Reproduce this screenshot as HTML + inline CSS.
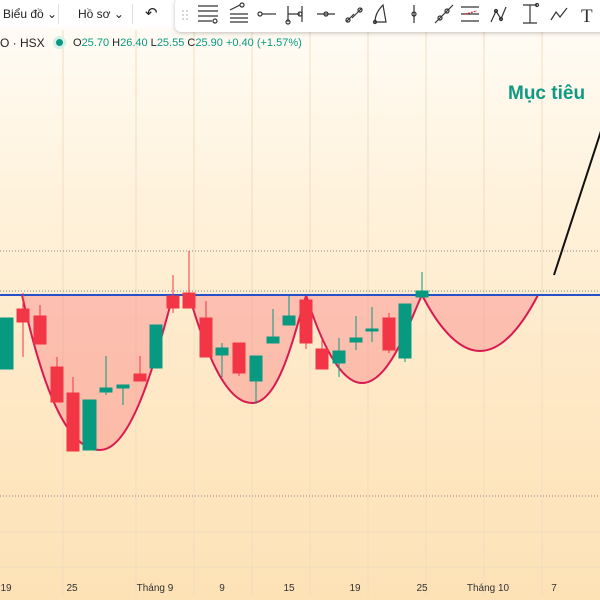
<!DOCTYPE html>
<html><head><meta charset="utf-8"><style>
html,body{margin:0;padding:0;width:600px;height:600px;overflow:hidden;font-family:"Liberation Sans",sans-serif}
body{background:linear-gradient(#fffdf9 0%,#fff3de 30%,#fee9c8 60%,#fde2b6 100%);position:relative}
.top{position:absolute;left:0;top:0;width:600px;height:28px;background:#fff;font-size:12px;color:#222}
.tb{position:absolute;left:175px;top:-2px;width:440px;height:34px;background:#fff;border-radius:6px;box-shadow:0 1px 4px rgba(0,0,0,.25)}
.leg{position:absolute;top:36px;left:0;font-size:12px;color:#222}
</style></head><body>
<svg width="600" height="600" style="position:absolute;left:0;top:0">
<g stroke="#f0dcc0" stroke-width="1">
<line x1="63" y1="30" x2="63" y2="596"/><line x1="136" y1="30" x2="136" y2="596"/><line x1="194" y1="30" x2="194" y2="596"/><line x1="252" y1="30" x2="252" y2="596"/><line x1="310" y1="30" x2="310" y2="596"/><line x1="368" y1="30" x2="368" y2="596"/><line x1="426" y1="30" x2="426" y2="596"/><line x1="484" y1="30" x2="484" y2="596"/><line x1="542" y1="30" x2="542" y2="596"/>
<line x1="0" y1="532" x2="600" y2="532"/><line x1="0" y1="567" x2="600" y2="567"/>
</g>
<g stroke="#888" stroke-dasharray="1 2" stroke-width="1">
<line x1="0" y1="251" x2="600" y2="251"/><line x1="0" y1="291" x2="600" y2="291"/><line x1="0" y1="496" x2="600" y2="496"/>
</g>
<path d="M22 295 C45 400 70 450 100 450 C135 450 160 340 173 296 Z" fill="rgba(250,110,120,0.35)"/>
<path d="M189 295 C205 350 225 403 252 403 C280 403 295 330 306 296 Z" fill="rgba(250,110,120,0.35)"/>
<path d="M306 295 C320 340 340 383 362 383 C390 383 410 320 422 295 Z" fill="rgba(250,110,120,0.35)"/>
<path d="M422 295 C440 330 460 351 480 351 C505 351 525 320 538 295 Z" fill="rgba(250,110,120,0.35)"/>
<g fill="none" stroke="#d81b50" stroke-width="2">
<path d="M22 295 C45 400 70 450 100 450 C135 450 160 340 173 296"/>
<path d="M189 295 C205 350 225 403 252 403 C280 403 295 330 306 296"/>
<path d="M306 295 C320 340 340 383 362 383 C390 383 410 320 422 295"/>
<path d="M422 295 C440 330 460 351 480 351 C505 351 525 320 538 295"/>
</g>
<line x1="0" y1="295" x2="600" y2="295" stroke="#2550c8" stroke-width="2"/>
<line x1="554" y1="275" x2="602" y2="128" stroke="#111" stroke-width="2"/>
<g stroke-width="1">
<g fill="#f23645" stroke="#f23645">
<line x1="23" y1="293" x2="23" y2="357"/><rect x="17" y="309" width="12" height="13"/>
<line x1="40" y1="305" x2="40" y2="344"/><rect x="34" y="316" width="12" height="28"/>
<line x1="57" y1="357" x2="57" y2="402"/><rect x="51" y="367" width="12" height="35"/>
<line x1="73" y1="377" x2="73" y2="451"/><rect x="67" y="393" width="12" height="58"/>
<line x1="140" y1="356" x2="140" y2="381"/><rect x="134" y="374" width="12" height="7"/>
<line x1="173" y1="275" x2="173" y2="313"/><rect x="167" y="296" width="12" height="12"/>
<line x1="189" y1="251" x2="189" y2="308"/><rect x="183" y="293" width="12" height="15"/>
<line x1="206" y1="301" x2="206" y2="357"/><rect x="200" y="318" width="12" height="39"/>
<line x1="239" y1="343" x2="239" y2="376"/><rect x="233" y="343" width="12" height="30"/>
<line x1="306" y1="296" x2="306" y2="349"/><rect x="300" y="300" width="12" height="43"/>
<line x1="322" y1="340" x2="322" y2="369"/><rect x="316" y="349" width="12" height="20"/>
<line x1="389" y1="313" x2="389" y2="353"/><rect x="383" y="318" width="12" height="32"/>
</g>
<g fill="#089981" stroke="#089981">
<rect x="0" y="318" width="13" height="51"/>
<rect x="83" y="400" width="13" height="50"/>
<line x1="106" y1="356" x2="106" y2="395"/><rect x="100" y="388" width="12" height="4"/>
<line x1="123" y1="385" x2="123" y2="405"/><rect x="117" y="385" width="12" height="3"/>
<rect x="150" y="325" width="12" height="43"/>
<line x1="222" y1="343" x2="222" y2="377"/><rect x="216" y="348" width="12" height="7"/>
<line x1="256" y1="356" x2="256" y2="404"/><rect x="250" y="356" width="12" height="25"/>
<line x1="273" y1="309" x2="273" y2="343"/><rect x="267" y="337" width="12" height="6"/>
<line x1="289" y1="296" x2="289" y2="325"/><rect x="283" y="316" width="12" height="9"/>
<line x1="339" y1="338" x2="339" y2="377"/><rect x="333" y="351" width="12" height="12"/>
<line x1="356" y1="316" x2="356" y2="350"/><rect x="350" y="338" width="12" height="4"/>
<line x1="372" y1="307" x2="372" y2="342"/><rect x="366" y="329" width="12" height="2"/>
<line x1="405" y1="304" x2="405" y2="362"/><rect x="399" y="304" width="12" height="54"/>
<line x1="422" y1="272" x2="422" y2="297"/><rect x="416" y="291" width="12" height="6"/>
</g></g>
<text x="508" y="99" font-size="19" font-weight="bold" fill="#0f9a84" font-family="Liberation Sans, sans-serif">Mục tiêu</text>
<g font-size="10" fill="#333" font-family="Liberation Sans, sans-serif" text-anchor="middle">
<text x="6" y="591">19</text><text x="72" y="591">25</text><text x="155" y="591">Tháng 9</text><text x="222" y="591">9</text><text x="289" y="591">15</text><text x="355" y="591">19</text><text x="422" y="591">25</text><text x="488" y="591">Tháng 10</text><text x="554" y="591">7</text>
</g>
</svg>
<div class="top">
<span style="position:absolute;left:3px;top:7px">Biểu đồ ⌄</span>
<span style="position:absolute;left:58px;top:4px;width:1px;height:20px;background:#e0e0e0"></span>
<span style="position:absolute;left:78px;top:7px">Hồ sơ ⌄</span>
<span style="position:absolute;left:132px;top:4px;width:1px;height:20px;background:#e0e0e0"></span>
<span style="position:absolute;left:145px;top:4px;font-size:15px">↶</span>
</div>
<div class="tb">
<svg width="440" height="34" style="position:absolute;left:0;top:0" fill="none" stroke="#333" stroke-width="1.2">
<g fill="#ccc" stroke="none"><circle cx="8" cy="13" r="1"/><circle cx="12" cy="13" r="1"/><circle cx="8" cy="17" r="1"/><circle cx="12" cy="17" r="1"/><circle cx="8" cy="21" r="1"/><circle cx="12" cy="21" r="1"/></g>
<path d="M23 8h20M23 13h20M23 18h20M23 23h14"/><circle cx="40" cy="23" r="2"/>
<path d="M55 12l10-5M55 16h18M55 20h18M55 24h18"/><circle cx="67" cy="7" r="2"/>
<path d="M87 16h14"/><circle cx="85" cy="16" r="2"/>
<path d="M113 8v16M113 16h12M127 8v16"/><circle cx="113" cy="24" r="2"/><circle cx="125" cy="16" r="2"/>
<path d="M142 16h18"/><circle cx="151" cy="16" r="2"/>
<path d="M171 24l8-8M177 20l10-10"/><circle cx="173" cy="22" r="2"/><circle cx="185" cy="12" r="2"/>
<path d="M200 24q0-9 8-17l3 17z"/><circle cx="200" cy="24" r="1.5"/>
<path d="M239 7v18"/><circle cx="239" cy="16" r="2"/>
<path d="M260 25l18-18"/><circle cx="265" cy="20" r="2"/><circle cx="272" cy="13" r="2"/>
<path d="M260 25l0 0"/>
<path d="M286 9h18M286 16h18M286 23h18"/><path d="M290 16l12-3" stroke="#c33" stroke-dasharray="2 1"/>
<path d="M316 24l5-11l5 8l5-12"/><circle cx="321" cy="13" r="1.5"/><circle cx="326" cy="21" r="1.5"/>
<path d="M348 7h14M355 7v18M348 25h14"/><circle cx="362" cy="7" r="1.5"/>
<path d="M376 22l5-8l4 5l7-9"/>
<text x="406" y="24" font-size="19" fill="#333" stroke="none" font-family="Liberation Serif,serif">T</text>
</svg>
</div>
<div class="leg">
<span style="position:absolute;left:0;top:0;white-space:nowrap">O · HSX</span>
<span style="position:absolute;left:56px;top:3px;width:7px;height:7px;border-radius:50%;background:#089981;box-shadow:0 0 0 3px #d5efe9"></span>
<span style="position:absolute;left:73px;top:1px;white-space:nowrap;font-size:11px">O<b style="font-weight:normal;color:#089981">25.70</b> H<b style="font-weight:normal;color:#089981">26.40</b> L<b style="font-weight:normal;color:#089981">25.55</b> C<b style="font-weight:normal;color:#089981">25.90</b> <b style="font-weight:normal;color:#089981">+0.40 (+1.57%)</b></span>
</div>
</body></html>
